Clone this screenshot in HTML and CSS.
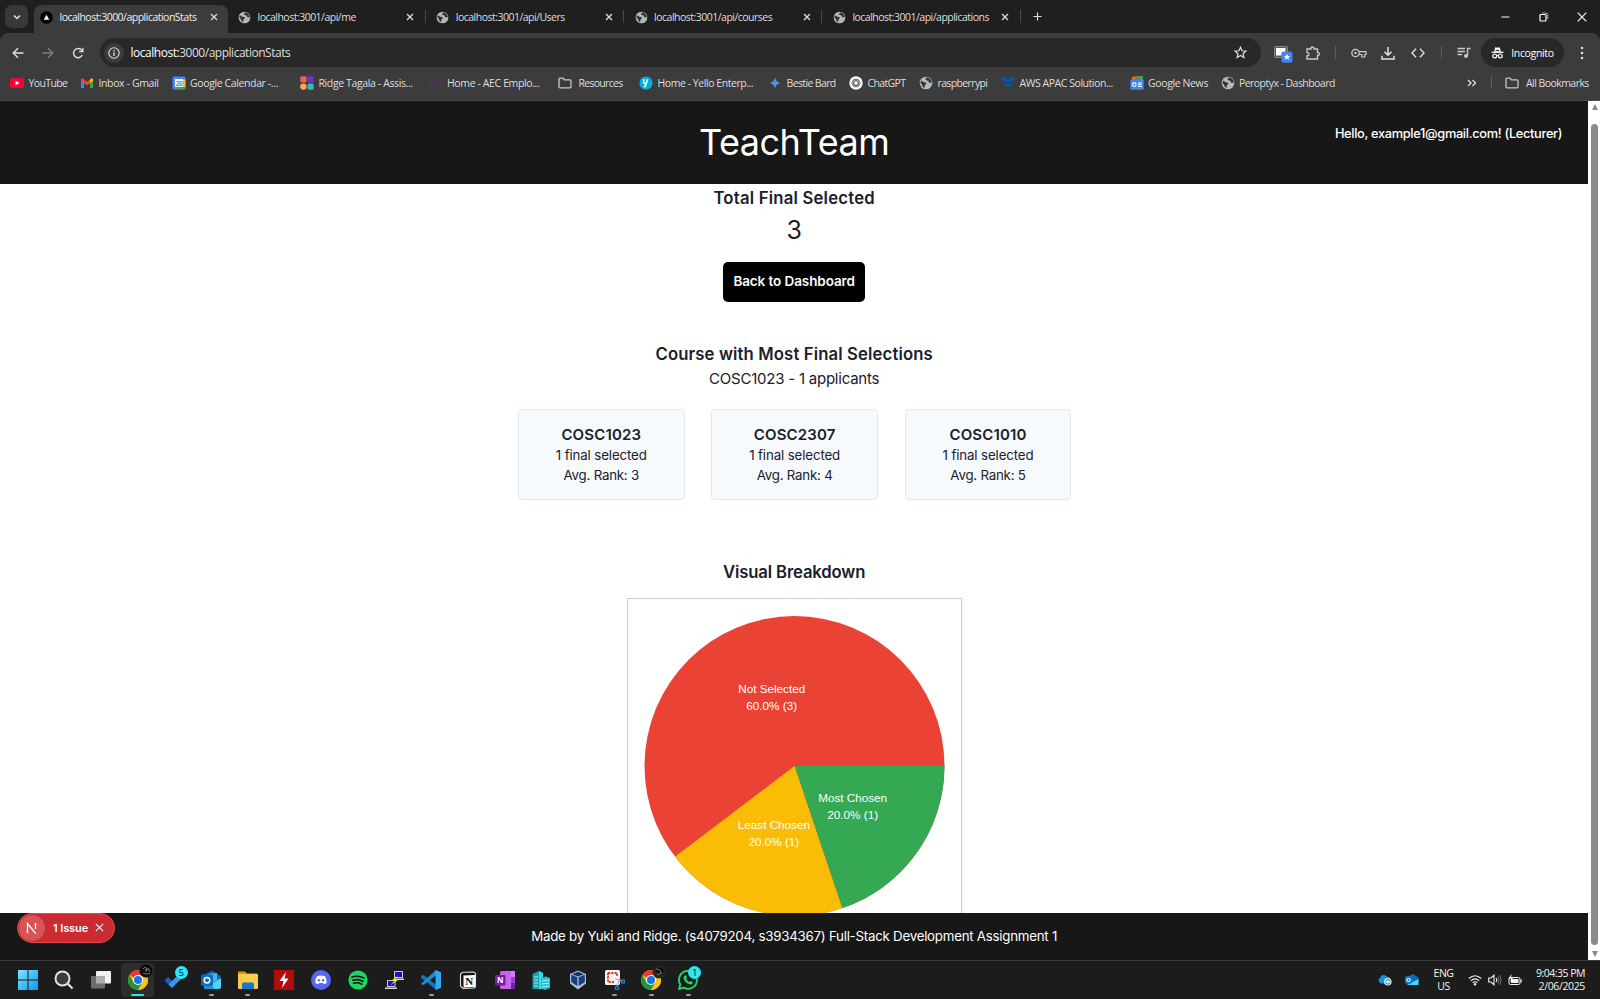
FILE: index.html
```html
<!DOCTYPE html>
<html lang="en">
<head>
<meta charset="utf-8">
<title>TeachTeam</title>
<link rel="stylesheet" href="styles.css">
</head>
<body>
<svg class="defs" aria-hidden="true">
  <symbol id="globe" viewBox="0 0 14 14"><circle cx="7" cy="7" r="6.300" fill="#b4b7bb"/><path d="M2.200 4.500 4.600 6.200l2.200.2.500 1.400-1.500 1.600-.3 2.600-1.500-1L2.800 8.200 1.400 7zM7.500 1.600 6.400 3.400l1.400 1.200 1.700.2.200 1.600 2.600.6.400-1.200L11.800 3.800 9.800 2z" fill="#333"/></symbol>
  <symbol id="x" viewBox="0 0 8 8"><path d="M1 1 7 7M7 1 1 7" stroke="#dedede" stroke-width="1.300"/></symbol>
  <symbol id="folder" viewBox="0 0 14 12"><path d="M1 2.200Q1 1.200 2 1.200H5L6.500 2.800H12Q13 2.800 13 3.800V9.800Q13 10.800 12 10.800H2Q1 10.800 1 9.800Z" fill="none" stroke="#c7c7c7" stroke-width="1.300"/></symbol>
  <symbol id="chrome" viewBox="0 0 20 20"><circle cx="10" cy="10" r="10" fill="#fbc116"/><path d="M10 10 1.340 5A10 10 0 0 1 18.660 5H10Z" fill="#e33b2e"/><path d="M1.340 5A10 10 0 0 0 10 20L14.330 12.500 10 10 5.670 12.500Z" fill="#229342"/><path d="M18.660 5H10V10L14.330 12.500 10 20A10 10 0 0 0 18.660 5Z" fill="#fbc116"/><circle cx="10" cy="10" r="5" fill="#fff"/><circle cx="10" cy="10" r="4" fill="#1a73e8"/></symbol>
</svg>

<header class="tabs">
  <div class="tab-search"><svg width="10" height="10" viewBox="0 0 10 10"><path d="M2 3.500 5 6.500 8 3.500" fill="none" stroke="#e3e3e3" stroke-width="1.500"/></svg></div>
  <div class="tab active"><svg viewBox="0 0 14 14"><circle cx="7" cy="7" r="6.800" fill="#000"/><path d="M7 4 10 9.300H4Z" fill="#fff"/></svg><span>localhost:3000/applicationStats</span><svg class="close"><use href="#x"/></svg></div>
  <div class="tab"><svg class="fav"><use href="#globe"/></svg><span>localhost:3001/api/me</span><svg class="close"><use href="#x"/></svg></div>
  <div class="tab"><svg class="fav"><use href="#globe"/></svg><span>localhost:3001/api/Users</span><svg class="close"><use href="#x"/></svg></div>
  <div class="tab"><svg class="fav"><use href="#globe"/></svg><span>localhost:3001/api/courses</span><svg class="close"><use href="#x"/></svg></div>
  <div class="tab"><svg class="fav"><use href="#globe"/></svg><span>localhost:3001/api/applications</span><svg class="close"><use href="#x"/></svg></div>
  <svg class="new-tab" viewBox="0 0 10 10"><path d="M5 .5V9.500M.5 5H9.500" stroke="#dedede" stroke-width="1.300"/></svg>
  <div class="window-buttons">
    <svg width="9" height="10" viewBox="0 0 9 10"><path d="M.5 5H8.500" stroke="#fff"/></svg>
    <svg width="10" height="10" viewBox="0 0 10 10"><rect x="1" y="2.500" width="6" height="6.500" rx="1" fill="none" stroke="#fff" stroke-width="1.200"/><path d="M3 1H7Q8.800 1 8.800 2.800V7" fill="none" stroke="#aaa"/></svg>
    <svg width="10" height="10" viewBox="0 0 10 10"><path d="M.7.700 9.300 9.300M9.300.700.7 9.300" stroke="#fff" stroke-width="1.100"/></svg>
  </div>
</header>

<section class="toolbar">
  <div class="cell"><svg width="12" height="12" viewBox="0 0 12 12"><path d="M11.500 6H1.500M6 1.200 1.200 6 6 10.800" fill="none" stroke="#dedede" stroke-width="1.400"/></svg></div>
  <div class="cell"><svg width="12" height="12" viewBox="0 0 12 12"><path d="M.5 6H10.500M6 1.200 10.800 6 6 10.800" fill="none" stroke="#7c7c7c" stroke-width="1.400"/></svg></div>
  <div class="cell"><svg width="12" height="12" viewBox="0 0 12 12"><path d="M10.300 8A4.600 4.600 0 1 1 9.800 3.300L10.500 4.200M10.800.8V4.600H7" fill="none" stroke="#dedede" stroke-width="1.400"/></svg></div>
  <div class="url">
    <div class="info"><svg width="12" height="12" viewBox="0 0 12 12"><circle cx="6" cy="6" r="5.200" fill="none" stroke="#dedede" stroke-width="1.100"/><path d="M6 5.300V9M6 3V4.300" stroke="#dedede" stroke-width="1.300"/></svg></div>
    <span><b>localhost:</b>3000/applicationStats</span>
    <svg class="star" width="13" height="13" viewBox="0 0 13 13"><path d="M6.500 1.200 8 4.800 11.900 5.100 9 7.700 9.900 11.500 6.500 9.500 3.100 11.500 4 7.700 1.100 5.100 5 4.800Z" fill="none" stroke="#dedede" stroke-width="1.200"/></svg>
  </div>
  <div class="cell ext"><svg width="20" height="20" viewBox="0 0 20 20"><rect x="1.500" y="3.500" width="13" height="11" rx="1.500" fill="#555" stroke="#8a8a8a"/><rect x="3" y="5" width="9.500" height="7.500" fill="#fff"/><rect x="8.300" y="8.500" width="11.200" height="11.200" rx="2.500" fill="#4285f4"/><path d="M14 11 15 13 17.200 13.200 15.600 14.600 16 16.700 14 15.600 12 16.700 12.400 14.600 10.800 13.200 13 13Z" fill="#fff"/></svg></div>
  <div class="cell"><svg width="14" height="14" viewBox="0 0 14 14"><path d="M1 3H5Q4.800 1 6.500 1T8 3H11.500V6.500Q13.300 6.300 13.300 8T11.500 9.500V13H1V9.800Q3 9.800 3 8.200T1 6.500Z" fill="none" stroke="#c7c7c7" stroke-width="1.400"/></svg></div>
  <i class="sep"></i>
  <div class="cell"><svg width="16" height="10" viewBox="0 0 16 10"><circle cx="4.500" cy="5" r="3.700" fill="none" stroke="#c7c7c7" stroke-width="1.300"/><circle cx="4.500" cy="5" r="1.200" fill="#c7c7c7"/><path d="M8 3.700H15V6.500H13.800V9H10.800V6.500H8" fill="none" stroke="#c7c7c7" stroke-width="1.200"/></svg></div>
  <div class="cell"><svg width="14" height="14" viewBox="0 0 14 14"><path d="M7 1V9M3.500 5.800 7 9.300 10.500 5.800M1 9.800V13H13V9.800" fill="none" stroke="#dedede" stroke-width="1.500"/></svg></div>
  <div class="cell"><svg width="14" height="10" viewBox="0 0 14 10"><path d="M5 .8 1 5 5 9.200M9 .8 13 5 9 9.200" fill="none" stroke="#dedede" stroke-width="1.400"/></svg></div>
  <i class="sep"></i>
  <div class="cell"><svg width="14" height="12" viewBox="0 0 14 12"><path d="M.5 1.500H8M.5 4.500H8M.5 7.500H5M10.500 9V1.500H13.500" fill="none" stroke="#c7c7c7" stroke-width="1.400"/><circle cx="9" cy="9" r="2" fill="#c7c7c7"/></svg></div>
  <div class="incognito"><svg width="13" height="13" viewBox="0 0 13 13"><path d="M3 5.800 4.300 1.200 6.500 1.800 8.700 1.200 10 5.800Z" fill="#fff"/><path d="M.5 6.300H12.500" stroke="#fff" stroke-width="1.200"/><path d="M4.600 4.300H8.400" stroke="#282828"/><circle cx="3.700" cy="9.900" r="1.900" fill="none" stroke="#fff" stroke-width="1.200"/><circle cx="9.300" cy="9.900" r="1.900" fill="none" stroke="#fff" stroke-width="1.200"/><path d="M5.500 9.500H7.500" stroke="#fff"/></svg><span>Incognito</span></div>
  <svg class="dots" width="4" height="14" viewBox="0 0 4 14"><g fill="#dedede"><circle cx="2" cy="2" r="1.300"/><circle cx="2" cy="7" r="1.300"/><circle cx="2" cy="12" r="1.300"/></g></svg>
</section>

<nav class="bookmarks">
  <a class="tight"><svg viewBox="0 0 14 14"><rect y="2" width="14" height="10" rx="2.500" fill="#f03"/><path d="M5.500 4.800V9.200L9.500 7Z" fill="#fff"/></svg><span>YouTube</span></a>
  <a><svg viewBox="0 0 14 14"><path d="M1 3.500V12H4V6Z" fill="#4285f4"/><path d="M13 3.500V12H10V6Z" fill="#34a853"/><path d="M1 3 2.500 2.300 7 5.800 11.500 2.300 13 3V5L7 9.500 1 5Z" fill="#ea4335"/><path d="M10 4 11.500 2.300 13 3V5L10 7.200Z" fill="#fbbc04"/></svg><span>Inbox - Gmail</span></a>
  <a><svg viewBox="0 0 14 14"><rect x=".5" y=".5" width="13" height="13" rx="1.500" fill="#4285f4"/><path d="M11 3.500H13.500V11L11 13.500Z" fill="#fbbc04"/><path d="M3 11H11V13.500H3Z" fill="#34a853"/><path d="M11 11H13.500L11 13.500Z" fill="#ea4335"/><rect x="3" y="3" width="8" height="8" fill="#fff"/><text x="7" y="9.500" font-size="6.500" font-weight="700" text-anchor="middle" fill="#4285f4">20</text></svg><span>Google Calendar -...</span></a>
  <a><svg viewBox="0 0 14 14"><rect x=".3" y=".3" width="6.300" height="6.300" rx="1.500" fill="#f0605a"/><path d="M7.500.3H12Q13.700.3 13.700 2V6.500H10.500Q7.500 6.500 7.500 3.500Z" fill="#6a35c9"/><circle cx="3.400" cy="10.600" r="3.200" fill="#ffa940"/><rect x="7.500" y="7.500" width="6.200" height="6.200" rx="1.500" fill="#33b5c4"/></svg><span>Ridge Tagala - Assis...</span></a>
  <a><svg viewBox="0 0 14 14"><path d="M4 10.500A3 3 0 0 1 2.300 5.600 3 3 0 0 1 7 4 3 3 0 0 1 11.700 5.600 3 3 0 0 1 10 10.500L8 8H6Z" fill="none" stroke="#5b2a75" stroke-width="1.200"/></svg><span>Home - AEC Emplo...</span></a>
  <a class="wide tightest"><svg viewBox="0 0 14 12"><use href="#folder"/></svg><span>Resources</span></a>
  <a class="snug"><svg viewBox="0 0 14 14"><circle cx="7" cy="7" r="6.600" fill="#06aed5"/><path d="M4.800 3.200 4.600 6.300Q4.700 8 7 7.500L8.600 3.200M8.500 3.500 7 8.500Q6.500 10.800 4.800 11" fill="none" stroke="#fff" stroke-width="1.500"/></svg><span>Home - Yello Enterp...</span></a>
  <a class="tight"><svg viewBox="0 0 14 14"><path d="M7 1.200Q7.800 6.200 12.800 7 7.800 7.800 7 12.800 6.200 7.800 1.200 7 6.200 6.200 7 1.200Z" fill="#5690e8"/></svg><span>Bestie Bard</span></a>
  <a class="tight"><svg viewBox="0 0 14 14"><circle cx="7" cy="7" r="6.700" fill="#fff"/><g fill="none" stroke="#444" stroke-width=".7"><ellipse cx="7" cy="7" rx="4.300" ry="2.200"/><ellipse cx="7" cy="7" rx="4.300" ry="2.200" transform="rotate(60 7 7)"/><ellipse cx="7" cy="7" rx="4.300" ry="2.200" transform="rotate(120 7 7)"/></g></svg><span>ChatGPT</span></a>
  <a class="tight"><svg viewBox="0 0 14 14"><use href="#globe"/></svg><span>raspberrypi</span></a>
  <a class="snug"><svg viewBox="0 0 14 14"><path d="M0 2.500 3 1 7 2.500 11 1 14 2.500 7 13Z" fill="#16519b"/><path d="M3 5 7 8 11 5" fill="none" stroke="#0b3566"/></svg><span>AWS APAC Solution...</span></a>
  <a><svg viewBox="0 0 14 14"><path d="M2 1 11 .3V5H2Z" fill="#fbbc04"/><path d="M5 0H13V5H5Z" fill="#34a853"/><path d="M2 .8H9L8 4H2Z" fill="#ea4335" opacity=".7"/><rect x=".3" y="3.500" width="13.400" height="10.200" rx="1" fill="#4285f4"/><circle cx="4.300" cy="8.700" r="1.800" fill="none" stroke="#fff" stroke-width="1.100"/><path d="M8 7H12M8 8.700H11.500M8 10.500H12" stroke="#fff"/></svg><span>Google News</span></a>
  <a class="close-set"><svg viewBox="0 0 14 14"><use href="#globe"/></svg><span>Peroptyx - Dashboard</span></a>
  <a><svg viewBox="0 0 14 14"><path d="M3 4 6 7 3 10M7.500 4 10.500 7 7.500 10" fill="none" stroke="#dedede" stroke-width="1.300"/></svg></a>
  <i class="sep"></i>
  <a class="wide close-set"><svg viewBox="0 0 14 12"><use href="#folder"/></svg><span>All Bookmarks</span></a>
</nav>

<div class="viewport">
  <div class="page">
    <div class="banner">
      <div class="user">Hello, example1@gmail.com! (Lecturer)</div>
      <h1>TeachTeam</h1>
    </div>
    <main>
      <h2 class="total">Total Final Selected</h2>
      <div class="count">3</div>
      <div class="button"><span>Back to Dashboard</span></div>
      <h2 class="course">Course with Most Final Selections</h2>
      <p class="course-sub">COSC1023 - 1 applicants</p>
      <div class="cards">
        <div class="card"><h3>COSC1023</h3><p>1 final selected</p><p class="rank">Avg. Rank: 3</p></div>
        <div class="card"><h3>COSC2307</h3><p>1 final selected</p><p class="rank">Avg. Rank: 4</p></div>
        <div class="card"><h3>COSC1010</h3><p>1 final selected</p><p class="rank">Avg. Rank: 5</p></div>
      </div>
      <h2 class="breakdown">Visual Breakdown</h2>
      <div class="chart">
        <svg width="333" height="333" viewBox="0 0 333 333">
          <circle cx="166.500" cy="167" r="150" fill="#ea4335"/>
          <path d="M166.500 167H316.500A150 150 0 0 1 214.300 309.200Z" fill="#34a853"/>
          <path d="M166.500 167 214.300 309.200A150 150 0 0 1 47 257.700Z" fill="#fbbc05"/>
          <g fill="#fff" font-size="11.700" text-anchor="middle">
            <text x="143.700" y="94">Not Selected</text><text x="143.700" y="110.700">60.0% (3)</text>
            <text x="224.700" y="203.200">Most Chosen</text><text x="224.700" y="220">20.0% (1)</text>
            <text x="145.900" y="230">Least Chosen</text><text x="145.900" y="246.700">20.0% (1)</text>
          </g>
        </svg>
      </div>
    </main>
    <footer>Made by Yuki and Ridge. (s4079204, s3934367) Full-Stack Development Assignment 1</footer>
    <div class="issue">
      <div class="mark"><svg width="12" height="12" viewBox="0 0 12 12"><path d="M1.500 11V1.500L10 12M9.500 1V7" fill="none" stroke="#fff" stroke-width="1.300"/></svg></div>
      <span>1 Issue</span>
      <svg width="9" height="9" viewBox="0 0 8 8"><path d="M.7.700 7.300 7.300M7.300.700.7 7.300" stroke="#fff" stroke-width=".9"/></svg>
    </div>
  </div>
  <div class="scrollbar"><i class="up"></i><i class="thumb"></i><i class="down"></i></div>
</div>

<footer class="taskbar">
  <div class="apps">
    <div><svg viewBox="0 0 20 20"><defs><linearGradient id="win" x2="1" y2="1"><stop stop-color="#7fe3ff"/><stop offset="1" stop-color="#1098f0"/></linearGradient></defs><path d="M0 0H9.500V9.500H0ZM10.500 0H20V9.500H10.500ZM0 10.500H9.500V20H0ZM10.500 10.500H20V20H10.500Z" fill="url(#win)"/></svg></div>
    <div><svg viewBox="0 0 20 20"><circle cx="8.500" cy="8.500" r="7" fill="#3b3b3b" stroke="#e2e2e2" stroke-width="2"/><path d="M13.700 13.700 18.500 18.500" stroke="#e2e2e2" stroke-width="2.200"/></svg></div>
    <div><svg viewBox="0 0 20 20"><rect x="5" y="1" width="15" height="12.500" rx="1" fill="#f1f1f1"/><rect y="6" width="14" height="12.500" rx="1" fill="#6d6d6d"/><rect x="5" y="6" width="9" height="7.500" fill="#ababab"/></svg></div>
    <div class="current"><svg viewBox="0 0 20 20"><use href="#chrome"/></svg><svg class="avatar" viewBox="0 0 14 14"><circle cx="7" cy="7" r="6.500" fill="#0b0b0b"/><path d="M4 5Q6 2 8 5L7 8M9 4 11 8M4 9 7 10 11 9.500M6 5.500 8 7" fill="none" stroke="#8d6b5c" stroke-width="1.100"/></svg></div>
    <div><svg viewBox="0 0 20 20"><path d="M.5 10.500 4 7 9.500 12.500 8 18Z" fill="#1d5fc0"/><path d="M4.500 14.500 15.500 3.500 19 7 8 18Z" fill="#3b93ec"/></svg><b class="badge">5</b></div>
    <div class="open"><svg viewBox="0 0 20 20"><path d="M3 5 11 .5 19.500 6V18H3Z" fill="#1268b5"/><path d="M7 4 16 3V10L10 13Z" fill="#45b8f0"/><path d="M3 18 20 8V17Q20 19 18 19H5Q3 19 3 18Z" fill="#4fd2f8"/><path d="M3 9 14 19H5Q3 19 3 17Z" fill="#1b93e3"/><rect y="4.500" width="12" height="11.500" rx="1.500" fill="#0f6cbd"/><circle cx="6" cy="10.200" r="2.800" fill="none" stroke="#fff" stroke-width="1.500"/></svg></div>
    <div class="open"><svg viewBox="0 0 20 20"><path d="M0 1.500H7L9 3.500H19V12H0Z" fill="#dc9a14"/><rect y="4" width="20" height="15" rx="1" fill="#fdcc49"/><path d="M4 19V14Q4 12.500 5.500 12.500H14.500Q16 12.500 16 14V19Z" fill="#1979c9"/></svg></div>
    <div><svg viewBox="0 0 20 20"><rect width="20" height="20" fill="#b10d0d"/><path d="M12 2 5.500 11H9.500L8 18 14.500 8.500H10.500Z" fill="#fff"/></svg></div>
    <div><svg viewBox="0 0 20 20"><circle cx="10" cy="10" r="10" fill="#5865f2"/><path d="M6 6.200Q10 4.700 14 6.200 16 9.300 15.800 12.800 14.500 14 12.700 14.200L12 13H8L7.300 14.200Q5.500 14 4.200 12.800 4 9.300 6 6.200Z" fill="#fff"/><circle cx="7.900" cy="10.200" r="1.200" fill="#5865f2"/><circle cx="12.100" cy="10.200" r="1.200" fill="#5865f2"/></svg></div>
    <div><svg viewBox="0 0 20 20"><circle cx="10" cy="10" r="9.600" fill="#1ed760"/><path d="M4 7Q10 5 16 8M4.800 10.300Q10 8.500 15 11.200M5.500 13.300Q10 12 14 14.200" fill="none" stroke="#111" stroke-width="1.600" stroke-linecap="round"/></svg></div>
    <div><svg viewBox="0 0 20 20"><g stroke="#c8c8c8" fill="#1414c8"><rect x="9.500" y="1.500" width="8" height="6"/><rect x="2.500" y="10.500" width="7.500" height="6"/></g><path d="M9 8.500H19V10H9ZM0 17.500H12V19H0Z" fill="#d6d6d6"/><path d="M13 5.500 6 11 9.500 10.800 5 15.500 13 10 9.500 9.800Z" fill="#f7ec24"/></svg></div>
    <div class="open"><svg viewBox="0 0 20 20"><path d="M0 6.200 2 4.800 15.500 15V20L0 7.700Z" fill="#1277b8"/><path d="M0 13.800 15 0V5.500L2 15.200Z" fill="#1b8fd6"/><path d="M14.500 0 20 2.300V17.700L14.500 20Z" fill="#30a7ee"/></svg></div>
    <div><svg viewBox="0 0 20 20"><path d="M2.500 4 4.500 2.300 15.800 2 17.500 3.500V16.800L16 18 5 18.500 2.500 16Z" fill="#151515" stroke="#ddd" stroke-width="1.100"/><path d="M5.500 5.500 17 5V17L5.500 17.500Z" fill="#fff"/><text class="serif" x="11.200" y="15" font-size="11" text-anchor="middle" fill="#111">N</text></svg></div>
    <div><svg viewBox="0 0 20 20"><rect x="5" y="1" width="15" height="18" rx="1.500" fill="#ca64ea"/><path d="M16 1H20V7H16Z" fill="#e07bf5"/><path d="M16 7H20V13H16Z" fill="#a33dd0"/><path d="M16 13H20V19H16Z" fill="#7a1fae"/><rect y="5" width="10.500" height="10.500" rx="1" fill="#7719aa"/><text x="5.200" y="13.200" font-size="8" font-weight="700" text-anchor="middle" fill="#fff">N</text></svg></div>
    <div><svg viewBox="0 0 20 20"><path d="M1.500 4 8 1 12 3V19H1.500Z" fill="#18a5b0"/><path d="M8 1 12 3V19H8Z" fill="#3adbe0"/><path d="M10 8 15 6.500 19 8V18L14 20 10 18.500Z" fill="#22c3cc"/><path d="M3 7H7M3 10H7M3 13H7M3 16H7M11 11 18 10M11 14 18 13M11 17 18 16" stroke="#b7fbff" stroke-width=".9"/></svg></div>
    <div><svg viewBox="0 0 20 20"><path d="M10 .5 18 4V13.500L10 19.500 2 13.500V4Z" fill="#a9bfdc"/><path d="M10 7.500 16.800 4.700V12L10 16.500ZM10 7.500 3.200 4.700V12L10 16.500Z" fill="#1c3d77"/><path d="M10 1.700 15.800 4.200 10 6.500 4.200 4.200Z" fill="#16305f"/><path d="M10 7V17" stroke="#dbe6f4"/></svg></div>
    <div class="open"><svg viewBox="0 0 20 20"><rect y="0" width="15" height="15" rx="1.500" fill="#f4f4f4"/><path d="M3 3H12V6M3 3V12H9" fill="none" stroke="#cf3f2a" stroke-width="2" stroke-dasharray="2.200 1"/><path d="M10 9 18 11M12 17 15 8" stroke="#aab" stroke-width="1.200"/><circle cx="18" cy="11.500" r="1.700" fill="none" stroke="#1a86d8" stroke-width="1.300"/><circle cx="12" cy="18" r="1.700" fill="none" stroke="#1a86d8" stroke-width="1.300"/></svg></div>
    <div class="open"><svg viewBox="0 0 20 20"><use href="#chrome"/></svg><svg class="avatar" viewBox="0 0 14 14"><circle cx="7" cy="7" r="6.500" fill="#262626"/><path d="M3 6 7 2 12 5 10 10Z" fill="#0a0a0a"/><path d="M4 4 8 5 9 9M5 10 10 8" fill="none" stroke="#727272"/></svg></div>
    <div class="open"><svg viewBox="0 0 20 20"><path d="M1 19 2.300 14.500A9 9 0 1 1 5.600 17.700Z" fill="none" stroke="#25d366" stroke-width="1.900"/><path d="M6.500 5.500 8 5.300 9 7.800 8.200 9Q9.200 11 11.300 11.900L12.400 10.900 14.800 12Q14.800 14.500 12.500 14.500 7 13.500 5.500 8.200 5.400 6.500 6.500 5.500Z" fill="#25d366"/></svg><b class="badge">1</b></div>
  </div>
  <div class="tray">
    <svg width="14" height="12" viewBox="0 0 14 12"><path d="M3 9.500A3 3 0 0 1 2 4 4 4 0 0 1 9 2.500 3 3 0 0 1 12 6L8 9.500Z" fill="#1490df"/><circle cx="9.800" cy="7.800" r="3.800" fill="#d8e6f2"/><path d="M7.600 7.300A2.300 2.300 0 0 1 12 7.300M12 8.500A2.300 2.300 0 0 1 7.600 8.500" fill="none" stroke="#3c6f9c"/></svg>
    <svg width="14" height="12" viewBox="0 0 14 12"><path d="M2 3 8 0 13.500 3.500V11H2Z" fill="#1268b5"/><path d="M2 11 13.500 5V11Z" fill="#4fd2f8"/><rect y="2.500" width="7" height="7" rx="1" fill="#0f7bd0"/><circle cx="3.500" cy="6" r="1.600" fill="none" stroke="#fff"/></svg>
    <div class="lang"><span>ENG</span><span>US</span></div>
    <svg width="14" height="12" viewBox="0 0 14 12"><path d="M.8 4.500Q7-1 13.200 4.500M2.800 6.800Q7 3 11.200 6.800M4.700 8.800Q7 6.800 9.300 8.800" fill="none" stroke="#f3f3f3" stroke-width="1.100"/><circle cx="7" cy="10.300" r="1.200" fill="#f3f3f3"/></svg>
    <svg width="14" height="12" viewBox="0 0 14 12"><path d="M.7 4H3L6 1.200V10.800L3 8H.7ZM8 4Q9.500 6 8 8" fill="none" stroke="#f3f3f3" stroke-width="1.100"/><path d="M9.800 2.300Q12 6 9.800 9.700M11.800 1Q14.500 6 11.800 11" fill="none" stroke="#777"/></svg>
    <svg width="14" height="12" viewBox="0 0 14 12"><rect x="1" y="3.500" width="11" height="7" rx="1.500" fill="none" stroke="#f3f3f3"/><rect x="3" y="5" width="7.500" height="4" fill="#f3f3f3"/><path d="M13.200 5.500V8.500" stroke="#f3f3f3" stroke-width="1.200"/><path d="M3.500 0 .5 4.500H3L2 8 5.300 3.500H3Z" fill="#f3f3f3"/></svg>
    <div class="clock"><span>9:04:35 PM</span><span class="date">2/06/2025</span></div>
  </div>
</footer>
</body>
</html>
```
FILE: styles.css
```css
* { box-sizing: border-box; margin: 0; padding: 0; }
html, body { height: 100%; overflow: hidden; }
body { display: flex; flex-direction: column; width: 1600px; height: 999px; background: #fff; font-family: "Open Sans", "Noto Sans", sans-serif; font-size: 10.500px; color: #dedede; }
svg { display: block; flex: none; }
span { white-space: nowrap; }
.defs { width: 0; height: 0; position: absolute; }

.tabs { display: flex; height: 33px; padding: 5px 0 0 5px; background: #1f1f1f; flex: none; letter-spacing: -.51px; }
.tab-search { display: flex; align-items: center; justify-content: center; width: 23px; height: 23px; border-radius: 7px; background: #383838; }
.tab { position: relative; display: flex; align-items: center; width: 198.300px; height: 24px; padding: 0 11.500px 0 10.500px; flex: none; }
.tab svg { width: 13px; height: 13px; }
.tab span { margin: -1px 0 0 6.500px; }
.tab .close { width: 8px; height: 8px; margin-left: auto; }
.tab + .tab::after { content: ""; position: absolute; right: 0; top: 5px; width: 1px; height: 13px; background: #4a4a4a; }
.tab.active { width: 193.500px; height: 28px; margin: 0 0 0 6px; padding: 0 10px 4px 6px; background: #3c3c3c; border-radius: 8px 8px 0 0; color: #eee; }
.new-tab { width: 9px; height: 9px; margin: 7px 0 0 12px; }
.window-buttons { display: flex; gap: 28.500px; margin: 7px 13px 0 auto; }

.toolbar { display: flex; align-items: center; height: 39px; padding-left: 3.500px; background: #3c3c3c; flex: none; border-radius: 8px 8px 0 0; box-shadow: 0 -8px #1f1f1f; }
.tabs { position: relative; z-index: 1; }
.cell { display: flex; align-items: center; justify-content: center; width: 29.700px; }
.cell.ext { margin-left: 8px; }
.sep { width: 16px; height: 13px; background: linear-gradient(#5e5e5e, #5e5e5e) center / 1px 100% no-repeat; }
.url { display: flex; align-items: center; width: 1161px; height: 29px; margin-left: 7px; padding: 0 14px 0 4px; border-radius: 15px; background: #282828; font-size: 12px; letter-spacing: -.48px; }
.url span { margin-left: 7px; }
.url b { font-weight: 400; color: #fff; }
.info { display: flex; align-items: center; justify-content: center; width: 20px; height: 20px; border-radius: 50%; background: #3c3c3c; }
.star { margin-left: auto; }
.incognito { display: flex; align-items: center; gap: 7px; width: 82.500px; height: 29px; margin-left: 2.500px; padding-left: 10px; border-radius: 15px; background: #282828; color: #fff; letter-spacing: -.34px; }
.dots { margin-left: 16px; }

.bookmarks { display: grid; grid-template-columns: 70px 91.500px 128.500px 128.500px 129px 81.500px 129px 81px 70px 82px 128.500px 91px 244.500px 18.500px 21.500px 90px; align-items: center; height: 29px; padding: 0 0 7px 10px; background: #3c3c3c; border-bottom: 1px solid #4a4a4a; flex: none; letter-spacing: -.38px; }
.bookmarks a { display: flex; align-items: center; gap: 4.500px; }
.bookmarks a.wide { gap: 7px; }
.bookmarks svg { width: 14px; height: 14px; }
.snug { letter-spacing: -.45px; }
.close-set { letter-spacing: -.55px; }
.tight { letter-spacing: -.63px; }
.tightest { letter-spacing: -.71px; }

.viewport { display: flex; height: 859px; flex: none; font-family: Inter, "Liberation Sans", sans-serif; }
.page { position: relative; display: flex; flex-direction: column; width: 1588.300px; background: #fff; color: #1a202c; }
.banner { display: grid; align-items: center; height: 83px; padding-bottom: 1px; background: #171717; color: #fff; flex: none; }
.banner > * { grid-area: 1 / 1; }
.banner h1 { font-size: 36px; font-weight: 400; text-align: center; line-height: 40px; letter-spacing: -.5px; }
.user { align-self: start; padding: 22.500px 26.200px 0 0; text-align: right; font-size: 12.800px; line-height: 20px; font-weight: 500; letter-spacing: -.32px; }
main { display: flex; flex-direction: column; align-items: center; height: 729px; padding-top: 2px; overflow: hidden; }
main h2 { font-size: 16.700px; line-height: 25px; font-weight: 600; }
main .total { letter-spacing: .21px; }
.count { font-size: 25px; line-height: 38px; }
.button { display: flex; align-items: center; justify-content: center; width: 142.500px; height: 39.500px; margin-top: 13px; padding-bottom: 2px; border-radius: 5px; background: #000; color: #fff; font-size: 13.500px; font-weight: 600; letter-spacing: -.09px; flex: none; }
main .course { margin-top: 40.500px; letter-spacing: .13px; }
.course-sub { font-size: 15px; line-height: 23px; letter-spacing: -.23px; }
.cards { display: flex; gap: 26.700px; margin: 19.300px 0 0 1px; }
.card { width: 166.700px; height: 90.500px; padding-top: 13.700px; border: 1px solid #e2e8f0; border-radius: 4px; background: #f7fafc; text-align: center; font-size: 13.300px; line-height: 20px; letter-spacing: -.13px; }
.card h3 { font-size: 15px; line-height: 21px; font-weight: 600; letter-spacing: .15px; }
.rank { letter-spacing: -.22px; }
main .breakdown { margin-top: 60.500px; letter-spacing: -.14px; }
.chart { width: 335px; margin-top: 13.100px; border: 1px solid #ccc; font-family: "Liberation Sans", Arial, sans-serif; flex: none; }
.page > footer { height: 47px; padding-top: 12px; background: #171717; color: #fff; font-size: 13.300px; line-height: 22px; letter-spacing: -.244px; text-align: center; flex: none; }
.issue { position: absolute; left: 16.500px; bottom: 17px; display: flex; align-items: center; width: 98.500px; height: 30.500px; padding-left: 1px; border: 1px solid #e5484d; border-radius: 16px; background: #ca2a30; color: #fff; font-size: 11px; font-weight: 600; letter-spacing: -.1px; }
.mark { display: flex; align-items: center; justify-content: center; width: 26px; height: 26px; margin-right: 8.500px; border-radius: 50%; background: #d75459; }
.issue > svg { margin-left: 7px; }
.scrollbar { display: flex; flex-direction: column; align-items: center; width: 11.700px; padding: 3px 0 3px 1px; background: #fff; }
.up, .down { border: 3.700px solid transparent; border-top-width: 0; border-bottom: 6px solid #8b8b8b; }
.down { border-bottom: 0; border-top: 6px solid #8b8b8b; }
.thumb { width: 7px; height: 821px; margin: 14px 0 6px; border-radius: 4px; background: #8b8b8b; }

.taskbar { display: flex; justify-content: space-between; height: 39px; padding: 0 15px 0 9.300px; background: #1c1c1c; border-top: 1px solid #3a3a3a; flex: none; }
.apps { display: grid; grid-template-columns: repeat(19, 36.700px); }
.apps > div { position: relative; display: flex; align-items: center; justify-content: center; }
.apps svg { width: 20px; height: 20px; }
.apps > .current { margin: 2px; border-radius: 4px; background: #2d2d2d; }
.apps .open::after, .apps .current::after { content: ""; position: absolute; bottom: 3px; width: 5px; height: 2px; border-radius: 1px; background: #9a9a9a; }
.apps .current::after { width: 13px; bottom: 1px; background: #2ee6f6; }
.apps .avatar { position: absolute; top: 4px; right: 4px; width: 14px; height: 14px; }
.apps .current .avatar { top: 1px; right: 1px; }
.badge { position: absolute; top: 5px; right: 5px; width: 13px; height: 13px; border-radius: 50%; background: #2ee6f6; color: #000; font-size: 9px; line-height: 13px; font-weight: 400; text-align: center; }
.serif { font-family: "Liberation Serif", serif; font-weight: 700; }
.tray { display: flex; align-items: center; color: #f3f3f3; letter-spacing: -.5px; }
.tray > svg + svg { margin-left: 6px; }
.tray > svg:nth-child(2) { margin-left: 13px; }
.lang { display: flex; flex-direction: column; align-items: center; width: 20px; margin: 0 24.500px 0 14.500px; line-height: 13.500px; }
.lang + svg { margin-left: -10px; }
.clock { display: flex; flex-direction: column; align-items: flex-end; width: 50px; margin-left: 13px; line-height: 13.500px; }
.date { letter-spacing: -.36px; }
```
